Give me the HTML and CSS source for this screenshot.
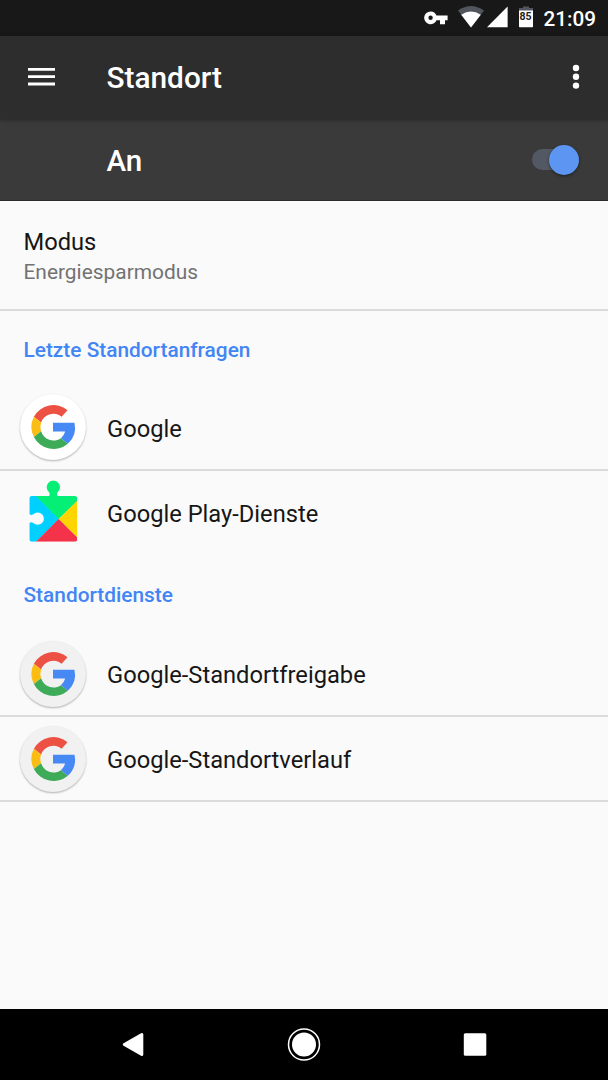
FILE: index.html
```html
<!DOCTYPE html>
<html lang="de">
<head>
    <meta charset="UTF-8">
    <meta name="viewport" content="width=device-width, initial-scale=1.0">
    <title>Standort</title>
    <link rel="stylesheet" href="styles.css">
</head>
<body>

<!-- shared Google logo -->
<svg class="defs" width="0" height="0">
    <symbol id="google" viewBox="0 0 200 200">
        <path fill="#ed5144" d="M144 49A67 67 0 0 0 42 69L64 86A39 39 0 0 1 126 69Z"/>
        <path fill="#fbbc13" d="M42 69A67 67 0 0 0 42 130L64 113A39 39 0 0 1 64 86Z"/>
        <path fill="#3dab58" d="M42 130A67 67 0 0 0 145 151L124 134A39 39 0 0 1 64 113Z"/>
        <path fill="#4688f4" d="M100 87H165A67 67 0 0 1 145 151L124 134Q133 127 137 114H100Z"/>
    </symbol>
</svg>

<div class="status-bar">
    <svg class="key" width="24" height="14" viewBox="0 0 24 14">
        <path fill="#fff" fill-rule="evenodd" d="M6.600 .4A6.400 6.400 0 1 0 12.500 9.200H16V13.300H21V9.200H23.600V4.600H12.500A6.400 6.400 0 0 0 6.600 .4ZM6.600 4.600A2.200 2.200 0 1 1 6.600 9A2.200 2.200 0 1 1 6.600 4.600Z"/>
    </svg>
    <svg class="wifi" width="26" height="22" viewBox="0 0 26 22">
        <path fill="#50555e" d="M0 4.600Q13 -4.600 26 4.600L13 21.400Z"/>
        <path fill="#fff" d="M3.200 8.700Q13 2.400 22.800 8.700L13 21.400Z"/>
    </svg>
    <svg class="signal" width="21" height="22" viewBox="0 0 21 22">
        <path fill="#fff" d="M20.600 .6V21.200H0Z"/>
    </svg>
    <div class="battery">
        <svg width="14" height="22" viewBox="0 0 14 22">
            <path fill="#50555e" d="M4 .4H10V2H14V5H0V2H4Z"/>
            <path fill="#fff" d="M0 4.400H14V20.400Q14 21.200 13.200 21.200H.8Q0 21.200 0 20.400Z"/>
        </svg>
        <span>85</span>
    </div>
    <span class="time">21:09</span>
</div>

<header class="toolbar">
    <svg class="menu" width="28" height="20" viewBox="0 0 28 20">
        <path fill="#fff" d="M0 1H27V3.800H0ZM0 8.300H27V11.100H0ZM0 15.600H27V18.400H0Z"/>
    </svg>
    <h1>Standort</h1>
    <svg class="more" width="8" height="26" viewBox="0 0 8 26">
        <g fill="#fff">
            <circle cx="4" cy="4" r="3.2"/>
            <circle cx="4" cy="12.8" r="3.2"/>
            <circle cx="4" cy="21.6" r="3.2"/>
        </g>
    </svg>
</header>

<div class="switch-bar">
    <span>An</span>
    <div class="switch"><div class="thumb"></div></div>
</div>

<main>
    <div class="mode">
        <div class="title">Modus</div>
        <div class="summary">Energiesparmodus</div>
    </div>

    <h2>Letzte Standortanfragen</h2>
    <div class="row line">
        <div class="icon white"><svg width="66" height="66"><use href="#google"/></svg></div>
        <span>Google</span>
    </div>
    <div class="row">
        <svg class="play" width="50" height="62" viewBox="57 28 150 186">
            <clipPath id="puzzle">
                <path d="M66 76H117Q121 72 117 65A20 20 0 1 1 143 65Q139 72 143 76H194Q202 76 202 84V205Q202 213 194 213H66Q58 213 58 205V157Q64 153 70 157A18.500 18.500 0 1 0 70 131Q64 135 58 131V84Q58 76 66 76Z"/>
            </clipPath>
            <g clip-path="url(#puzzle)">
                <path fill="#00d0ff" d="M50 60L78 74L148 145L76 215H50Z"/>
                <path fill="#05ef76" d="M78 76L90 20H170L210 84L146 145Z"/>
                <path fill="#ffd500" d="M205 87V204L146 145Z"/>
                <path fill="#f43249" d="M76 215L146 145L206 205V215Z"/>
            </g>
        </svg>
        <span>Google Play-Dienste</span>
    </div>

    <h2>Standortdienste</h2>
    <div class="row line">
        <div class="icon"><svg width="66" height="66"><use href="#google"/></svg></div>
        <span>Google-Standortfreigabe</span>
    </div>
    <div class="row line">
        <div class="icon"><svg width="66" height="66"><use href="#google"/></svg></div>
        <span>Google-Standortverlauf</span>
    </div>
</main>

<nav>
    <svg width="24" height="26" viewBox="0 0 24 26">
        <path fill="#fff" stroke="#fff" stroke-width="3" stroke-linejoin="round" d="M3.300 13.500L20.800 3.500V23.500Z"/>
    </svg>
    <svg width="34" height="34" viewBox="0 0 34 34">
        <circle cx="17" cy="17.500" r="15.500" fill="none" stroke="#fff" stroke-width="1.500"/>
        <circle cx="17" cy="17.500" r="12" fill="#fff"/>
    </svg>
    <svg width="24" height="24" viewBox="0 0 24 24">
        <rect x=".8" y="1.200" width="22.500" height="22.500" rx="1.500" fill="#fff"/>
    </svg>
</nav>

</body>
</html>
```
FILE: styles.css
```css
* {
    box-sizing: border-box;
}
body {
    margin: 0;
    height: 1080px;
    display: flex;
    flex-direction: column;
    overflow: hidden;
    font-family: Roboto, sans-serif;
    font-size: 23.7px;
    color: #161616;
    background-color: #fafafa;
}
svg {
    display: block;
    flex: none;
}
.defs {
    position: absolute;
}
.status-bar {
    height: 36px;
    display: flex;
    align-items: center;
    justify-content: flex-end;
    padding-right: 12px;
    background-color: #181818;
    color: #fff;
}
.key {
    margin-bottom: 1px;
}
.wifi {
    margin: 0 0 2px 10px;
}
.signal {
    margin: 0 0 2px 3px;
}
.battery {
    position: relative;
    margin: 0 11px 2px 11px;
}
.battery span {
    position: absolute;
    top: 5px;
    left: 0;
    width: 14px;
    text-align: center;
    font-size: 10.5px;
    line-height: 12px;
    font-weight: 700;
    color: #222;
}
.time {
    margin-top: 1px;
    font-size: 20.7px;
    font-weight: 500;
}
.toolbar {
    height: 83px;
    display: flex;
    align-items: center;
    padding: 0 28.5px 0 28px;
    background-color: #2d2d2d;
    color: #fff;
    box-shadow: 0 1px 4px rgba(0, 0, 0, 0.35);
    z-index: 1;
}
.menu {
    margin-bottom: 1px;
}
h1 {
    flex: 1;
    margin: 0 0 1px 50.5px;
    font-size: 29.8px;
    font-weight: 500;
}
.more {
    margin-bottom: 1px;
}
.switch-bar {
    height: 82px;
    display: flex;
    align-items: center;
    justify-content: space-between;
    padding: 0 29px 0 106.5px;
    background-color: #3a3a3a;
    border-bottom: 1px solid #2b2b2b;
    color: #fff;
    font-size: 29.6px;
    font-weight: 500;
}
.switch-bar span {
    margin-top: 2px;
}
.switch {
    width: 47px;
    height: 21px;
    display: flex;
    align-items: center;
    justify-content: flex-end;
    border-radius: 11px;
    background-color: #535964;
}
.thumb {
    width: 30px;
    height: 30px;
    border-radius: 50%;
    background-color: #5c95f2;
    box-shadow: 0 1px 3px rgba(0, 0, 0, 0.5);
}
main {
    flex: 1;
}
.mode {
    height: 110px;
    padding: 27px 23.5px 0;
    border-bottom: 2px solid #dbdbdb;
}
.title {
    line-height: 28px;
}
.summary {
    margin-top: 3px;
    font-size: 20.9px;
    line-height: 26px;
    color: #727272;
}
h2 {
    margin: 0;
    padding: 0 23.5px;
    height: 75px;
    line-height: 79px;
    font-size: 20.85px;
    font-weight: 500;
    color: #4285f4;
}
.row {
    height: 85px;
    display: flex;
    align-items: center;
    padding-left: 20px;
}
.row + h2 {
    height: 76px;
}
.line {
    border-bottom: 2px solid #dbdbdb;
}
.line span {
    margin-top: 2px;
}
.icon {
    width: 66px;
    height: 66px;
    margin: 0 21px 0 0;
    border-radius: 50%;
    background-color: #f1f1f1;
    box-shadow: 0 1px 2px rgba(0, 0, 0, 0.3);
}
.icon svg {
    margin-left: -0.5px;
}
.white {
    margin-bottom: 2px;
    background-color: #fff;
}
.play {
    margin: 0 28px 5px 9px;
}
nav {
    height: 71px;
    display: flex;
    align-items: center;
    justify-content: space-between;
    padding: 0 121px 1px;
    background-color: #000;
}
```
